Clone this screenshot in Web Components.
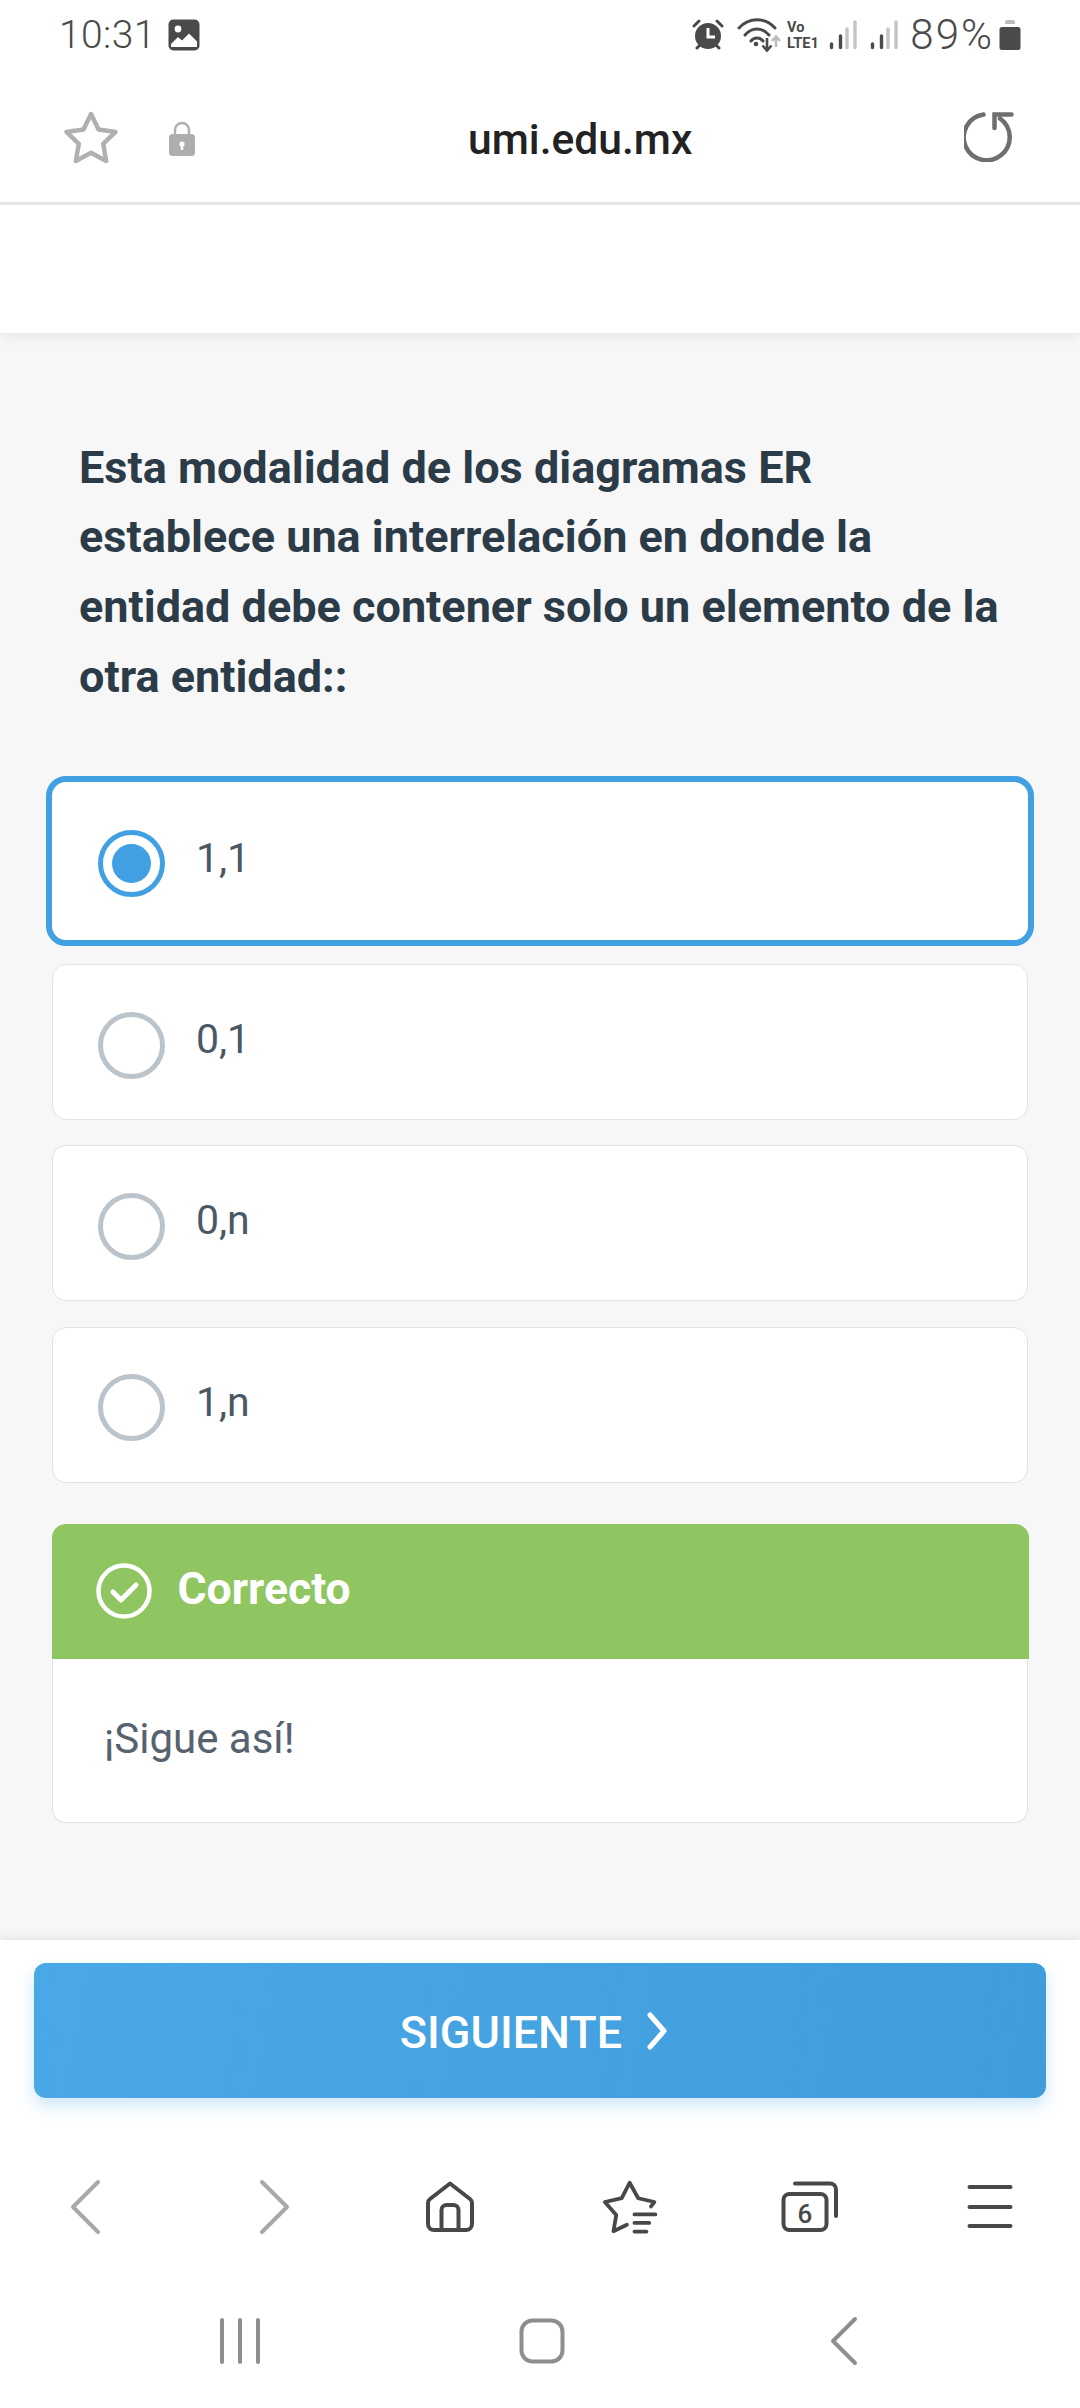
<!DOCTYPE html>
<html lang="es">
<head>
<meta charset="utf-8">
<title>umi.edu.mx</title>
<style>
  html, body { margin: 0; background: #fff; }
  body { font-family: Roboto, "Liberation Sans", sans-serif; }
  quiz-app { width: 1080px; height: 2408px; }
</style>
</head>
<body>
<quiz-app>
  <status-bar slot="chrome-top"></status-bar>
  <url-bar slot="chrome-top">umi.edu.mx</url-bar>
  <top-panel slot="chrome-top"></top-panel>

  <quiz-question>Esta modalidad de los diagramas ER<br>establece una interrelación en donde la<br>entidad debe contener solo un elemento de la<br>otra entidad::</quiz-question>
  <quiz-option selected>1,1</quiz-option>
  <quiz-option>0,1</quiz-option>
  <quiz-option>0,n</quiz-option>
  <quiz-option>1,n</quiz-option>
  <feedback-card title="Correcto">¡Sigue así!</feedback-card>

  <next-button slot="chrome-bottom">SIGUIENTE</next-button>
  <browser-toolbar slot="chrome-bottom"></browser-toolbar>
  <nav-bar slot="chrome-bottom"></nav-bar>
</quiz-app>

<script>
function shadow(el, html) {
  el.attachShadow({ mode: "open" });
  el.shadowRoot.innerHTML = html;
}

const signal = `<g stroke-width="3.400" stroke-linecap="round"><path d="M2.500 24v3.500M11.500 16v11.500" stroke="#4a4a4a"/><path d="M18 9v18.500M26 2v25.500" stroke="#c4c4c4"/></g>`;

class QuizApp extends HTMLElement {
  constructor() {
    super();
    shadow(this, `
      <style>
        :host { display: flex; flex-direction: column; background: #f7f7f7; }
        main { flex: 1; display: flex; flex-direction: column; padding: 99.500px 52px 0; }
        .chrome { display: block; }
      </style>
      <div class="chrome"><slot name="chrome-top"></slot></div>
      <main><slot></slot></main>
      <div class="chrome"><slot name="chrome-bottom"></slot></div>
    `);
  }
}

class StatusBar extends HTMLElement {
  constructor() {
    super();
    shadow(this, `
      <style>
        :host { display: flex; align-items: center; height: 66px; padding: 3px 0 0 59px; box-sizing: border-box; background: #fff; color: #4a4a4a; position: relative; z-index: 1; }
        .time { font: 300 39px/48px Roboto, sans-serif; letter-spacing: .4px; width: 109px; }
        .right { margin-left: auto; margin-right: 59px; display: flex; align-items: center; height: 48px; }
        .pct { font: 300 42px/48px Roboto, sans-serif; letter-spacing: 2px; margin: 0 5px 0 12px; }
        svg { display: block; }
      </style>
      <span class="time">10:31</span>
      <svg width="32" height="32" viewBox="0 0 32 32">
        <rect x="0.5" y="0.5" width="31" height="31" rx="5" fill="#4a4a4a"/>
        <circle cx="10" cy="10" r="3.4" fill="#fff"/>
        <path d="M3 25l7-7 4 3.5 7-7 8 8V28H3z" fill="#fff"/>
      </svg>
      <div class="right">
        <svg width="32" height="32" viewBox="0 0 32 32" style="margin-right:13px">
          <circle cx="16" cy="17" r="13" fill="#4a4a4a"/>
          <path d="M2 7l5-5M30 7l-5-5M5 29l3-3M27 29l-3-3" stroke="#4a4a4a" stroke-width="3" stroke-linecap="round"/>
          <path d="M16 9v9h7" fill="none" stroke="#fff" stroke-width="3"/>
        </svg>
        <svg width="46" height="36" viewBox="0 0 46 36" style="margin-right:4px">
          <g fill="none" stroke="#4a4a4a" stroke-width="3" stroke-linecap="round">
            <path d="M2 11C12 0 28 0 38 11"/>
            <path d="M8 18C15 10 25 10 32 18"/>
            <path d="M14 24C17 20 23 20 26 24"/>
          </g>
          <circle cx="19" cy="27" r="2.300" fill="#4a4a4a"/>
          <path d="M30 21v12M25.500 28.500l4.500 5 4.500-5" fill="none" stroke="#4a4a4a" stroke-width="2.600"/>
          <path d="M39 30V20M35 24l4-4.500 4 4.500" fill="none" stroke="#bdbdbd" stroke-width="2.600"/>
        </svg>
        <svg width="34" height="34" viewBox="0 0 34 34" style="margin-right:8px">
          <text x="0" y="14" font-family="Roboto, sans-serif" font-weight="700" font-size="14.500" fill="#4a4a4a">Vo</text>
          <text x="0" y="30" font-family="Roboto, sans-serif" font-weight="700" font-size="15.500" textLength="32" lengthAdjust="spacingAndGlyphs" fill="#4a4a4a">LTE1</text>
        </svg>
        <svg width="28" height="30" viewBox="0 0 28 30" style="margin-right:13px">${signal}</svg>
        <svg width="28" height="30" viewBox="0 0 28 30">${signal}</svg>
        <span class="pct">89%</span>
        <svg width="22" height="31" viewBox="0 0 22 31">
          <path d="M6 3a2 2 0 012-2h6a2 2 0 012 2v2H6z" fill="#bdbdbd"/>
          <rect x="0.500" y="8" width="21" height="23" rx="2.500" fill="#4a4a4a"/>
        </svg>
      </div>
    `);
  }
}

class UrlBar extends HTMLElement {
  constructor() {
    super();
    shadow(this, `
      <style>
        :host { display: flex; align-items: center; height: 139px; box-sizing: border-box; border-bottom: 3px solid #e5e5e5; background: #fff; padding: 9px 66px 0 64px; position: relative; z-index: 1; }
        .left { display: flex; align-items: center; gap: 51px; width: 404px; }
        .url { font: 500 42.600px/48px Roboto, sans-serif; color: #222; }
        .reload { margin-left: auto; margin-bottom: 4px; }
        svg { display: block; }
      </style>
      <div class="left">
        <svg width="54" height="54" viewBox="0 0 54 54" style="margin-bottom:2px">
          <path d="M27 3l7.500 15.500 17 2.400-12.300 12 3 17L27 41.800 11.800 49.900l3-17L2.500 20.900l17-2.400z" fill="none" stroke="#b0b0b0" stroke-width="4.500" stroke-linejoin="round"/>
        </svg>
        <svg width="26" height="36" viewBox="0 0 26 36" style="margin-top:1px">
          <path d="M6 15V9a7 7 0 0114 0v6" fill="none" stroke="#b0b0b0" stroke-width="2.500"/>
          <rect x="0" y="13" width="26" height="22" rx="3.500" fill="#aeaeae"/>
          <circle cx="13" cy="23" r="2.600" fill="#fff"/><path d="M13 24v5" stroke="#fff" stroke-width="2.500"/>
        </svg>
      </div>
      <span class="url"><slot></slot></span>
      <svg class="reload" width="50" height="50" viewBox="0 0 50 50">
        <g fill="none" stroke="#6e6e6e" stroke-width="4.500" stroke-linecap="round">
          <path d="M36 6.500A23 23 0 1 1 19.500 2.500"/>
          <path d="M30.500 16V2.500h17"/>
        </g>
      </svg>
    `);
  }
}

class TopPanel extends HTMLElement {
  constructor() {
    super();
    shadow(this, `
      <style>
        :host { display: block; height: 128px; background: #fff; box-shadow: 0 3px 12px rgba(0,0,0,.08); position: relative; }
      </style>
    `);
  }
}

class QuizQuestion extends HTMLElement {
  constructor() {
    super();
    shadow(this, `
      <style>
        :host { display: block; padding-left: 27px; margin-bottom: 71.500px; font: 700 45px/69.700px Roboto, sans-serif; color: #2b3b48; }
      </style>
      <slot></slot>
    `);
  }
}

class QuizOption extends HTMLElement {
  constructor() {
    super();
    shadow(this, `
      <style>
        :host { display: flex; align-items: center; gap: 31px; box-sizing: border-box; height: 156px; padding: 0 0 0 45px; margin-bottom: 25.300px; background: #fff; border: 1.500px solid #e2e2e2; border-radius: 14px; font: 400 41px/48px Roboto, sans-serif; color: #4a5863; }
        :host([selected]) { height: 170px; margin: -7px -6px 18.300px; padding-left: 46px; border: 6px solid #41a0e2; border-radius: 20px; }
        .radio { width: 67px; height: 67px; margin-top: 6px; box-sizing: border-box; border: 5px solid #bcc4cb; border-radius: 50%; display: grid; place-items: center; flex: none; }
        :host([selected]) .radio { border-color: #41a0e2; }
        :host([selected]) .radio::after { content: ""; width: 39px; height: 39px; border-radius: 50%; background: #41a0e2; }
        .label { margin-bottom: 6px; }
      </style>
      <span class="radio"></span><span class="label"><slot></slot></span>
    `);
  }
}

class FeedbackCard extends HTMLElement {
  constructor() {
    super();
    shadow(this, `
      <style>
        :host { display: block; margin-top: 15.700px; background: #fff; border: 1.500px solid #e2e2e2; border-top: 0; border-radius: 14px; box-sizing: border-box; height: 299px; }
        header { display: flex; align-items: center; gap: 26px; height: 135px; margin: 0 -1.500px; padding: 0 0 0 44px; background: #8fc661; border-radius: 14px 14px 0 0; color: #fff; font: 700 44.500px/48px Roboto, sans-serif; }
        header span { margin-bottom: 4px; }
        p { margin: 0; padding: 54px 0 0 51px; font: 400 42px/52px Roboto, sans-serif; color: #56626d; }
        svg { display: block; flex: none; }
      </style>
      <header>
        <svg width="56" height="56" viewBox="0 0 56 56">
          <circle cx="28" cy="28" r="25.500" fill="none" stroke="#fff" stroke-width="4.500"/>
          <path d="M17 29l8 8 15-15" fill="none" stroke="#fff" stroke-width="5" stroke-linecap="round" stroke-linejoin="round"/>
        </svg>
        <span id="t"></span>
      </header>
      <p><slot></slot></p>
    `);
    this.shadowRoot.querySelector("#t").textContent = this.getAttribute("title");
  }
}

class NextButton extends HTMLElement {
  constructor() {
    super();
    shadow(this, `
      <style>
        :host { display: block; padding: 23px 34px 32px; background: #fff; position: relative; box-shadow: 0 -2px 10px rgba(0,0,0,.09); }
        button { all: unset; box-sizing: border-box; display: flex; align-items: center; justify-content: center; gap: 25px; width: 100%; height: 135px; padding: 4px 13px 0 0; border-radius: 12px; background: linear-gradient(100deg, #4aa8e6, #3f9ddc); box-shadow: 0 8px 16px rgba(65,160,226,.25); color: #fff; font: 500 45px/52px Roboto, sans-serif; }
        svg { display: block; margin-bottom: 4px; }
      </style>
      <button>
        <span><slot></slot></span>
        <svg width="20" height="38" viewBox="0 0 20 38"><path d="M3 3l14 16L3 35" fill="none" stroke="#fff" stroke-width="5" stroke-linecap="round" stroke-linejoin="round"/></svg>
      </button>
    `);
  }
}

class BrowserToolbar extends HTMLElement {
  constructor() {
    super();
    shadow(this, `
      <style>
        :host { display: grid; grid-template-columns: repeat(6, 1fr); place-items: center; height: 154px; background: #fff; position: relative; }
        svg { display: block; }
        g { fill: none; stroke: #484848; stroke-width: 4; stroke-linecap: round; stroke-linejoin: round; }
        g.off { stroke: #a8a8a8; }
      </style>
      <svg width="54" height="56" viewBox="0 0 54 56" style="margin-right:6px"><g class="off"><path d="M38 3L13 28l25 25"/></g></svg>
      <svg width="54" height="56" viewBox="0 0 54 56" style="margin-left:6px"><g class="off"><path d="M16 3l25 25-25 25"/></g></svg>
      <svg width="50" height="52" viewBox="0 0 50 52"><g>
        <path d="M25 2.500L45 18a5 5 0 012 4v21a6 6 0 01-6 6H9a6 6 0 01-6-6V22a5 5 0 012-4z"/>
        <path d="M16.500 49V29a5 5 0 015-5h7a5 5 0 015 5v20"/>
      </g></svg>
      <svg width="57" height="55" viewBox="180 88 165 160"><g style="stroke-width:11">
        <path d="M322 165L332 152L285 141L260 96L237 141L188 152L221 190L213 237L252 218"/>
        <path d="M274 188H335M274 213H317M274 238H309"/>
      </g></svg>
      <svg width="58" height="52" viewBox="0 0 58 52">
        <g>
          <path d="M14 2.500h35a6 6 0 016 6V35"/>
          <rect x="2.500" y="13" width="43" height="36" rx="6"/>
        </g>
        <text x="24" y="42" text-anchor="middle" font-family="Roboto, sans-serif" font-size="26" font-weight="500" fill="#484848">6</text>
      </svg>
      <svg width="46" height="46" viewBox="0 0 46 46"><g><path d="M2.500 3h41M2.500 23h41M2.500 42h41"/></g></svg>
    `);
  }
}

class NavBar extends HTMLElement {
  constructor() {
    super();
    shadow(this, `
      <style>
        :host { display: grid; grid-template-columns: repeat(3, 302px); justify-content: center; justify-items: center; align-items: center; height: 124px; padding: 0 0 10px 4px; box-sizing: border-box; background: #fff; }
        svg { display: block; }
        g { fill: none; stroke: #8e8e8e; stroke-width: 4; stroke-linecap: round; stroke-linejoin: round; }
      </style>
      <svg width="44" height="46" viewBox="0 0 44 46"><g><path d="M4 2v42M22 2v42M40 2v42"/></g></svg>
      <svg width="46" height="46" viewBox="0 0 46 46"><g><rect x="2.500" y="2.500" width="41" height="41" rx="11"/></g></svg>
      <svg width="28" height="50" viewBox="0 0 28 50"><g><path d="M25 3L3 25l22 22"/></g></svg>
    `);
  }
}

customElements.define("quiz-app", QuizApp);
customElements.define("status-bar", StatusBar);
customElements.define("url-bar", UrlBar);
customElements.define("top-panel", TopPanel);
customElements.define("quiz-question", QuizQuestion);
customElements.define("quiz-option", QuizOption);
customElements.define("feedback-card", FeedbackCard);
customElements.define("next-button", NextButton);
customElements.define("browser-toolbar", BrowserToolbar);
customElements.define("nav-bar", NavBar);
</script>
</body>
</html>
